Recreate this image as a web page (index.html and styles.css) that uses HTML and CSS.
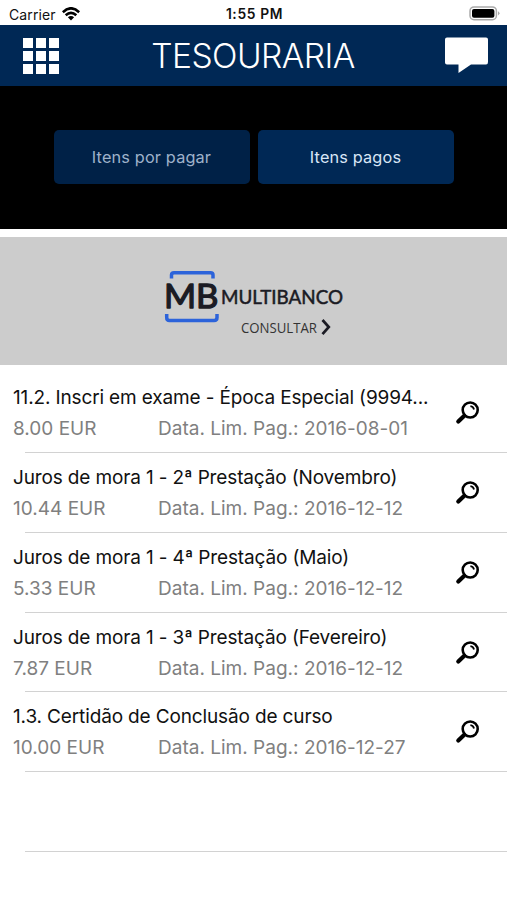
FILE: index.html
```html
<!DOCTYPE html>
<html lang="pt">
<head>
<meta charset="utf-8">
<title>Tesouraria</title>
<link rel="stylesheet" href="styles.css">
</head>
<body>
<svg class="defs" width="0" height="0" aria-hidden="true">
  <symbol id="search" viewBox="0 0 26 26">
    <circle cx="16.2" cy="10" r="7.5" fill="none" stroke="#000" stroke-width="2.6"/>
    <path d="M10.3 15.7L4.3 21.500" fill="none" stroke="#000" stroke-width="4.2" stroke-linecap="round"/>
    <path d="M16.400 6.2Q19.400 6.6 20 9.5" fill="none" stroke="#000" stroke-width="1.8"/>
  </symbol>
</svg>
<div class="status">
  <div class="carrier"><span>Carrier</span>
    <svg class="wifi" width="18" height="14" viewBox="0 0 18 14" fill="none" stroke="#000" stroke-width="2.6">
      <path d="M.8 5.2Q9-2.6 17.2 5.2M3.7 8.3Q9 3.3 14.3 8.3"/>
      <path d="M9 13.4L5.9 10.3Q9 7.8 12.1 10.3Z" fill="#000" stroke="none"/>
    </svg>
  </div>
  <span class="time">1:55 PM</span>
  <svg class="battery" width="31" height="15" viewBox="0 0 31 15">
    <rect x="1" y=".9" width="26.4" height="12.8" rx="4" fill="#fff" stroke="#aaa" stroke-width="1.5"/>
    <rect x="3" y="3" width="22.4" height="8.8" rx="2"/>
    <path d="M29 5.2Q32 7.3 29 9.4Z" fill="#aaa"/>
  </svg>
</div>
<header class="header">
  <div class="grid"><i></i><i></i><i></i><i></i><i></i><i></i><i></i><i></i><i></i></div>
  <h1>TESOURARIA</h1>
  <svg class="chat" width="44" height="37" viewBox="0 0 44 37"><path d="M2 .5H41Q43 .5 43 2.5V25Q43 27.5 41 27.5H26L13.5 36V27.5H2Q0 27.5 0 25.5V2.5Q0 .5 2 .5Z" fill="#fff"/></svg>
</header>
<nav class="tabs">
  <button class="tab tab-dim"><span>Itens por pagar</span></button>
  <button class="tab"><span>Itens pagos</span></button>
</nav>
<section class="banner">
  <svg width="204" height="72" viewBox="152 268 204 72">
    <path d="M171.500 278.500V275Q171.500 272.700 174 272.700H210.500Q213 272.700 213 275V278.500M166.700 314V317.500Q166.700 320.500 169.500 320.500H214Q217 320.500 217 317.500V314" fill="none" stroke="#2c63da" stroke-width="3.5"/>
    <text class="logo" x="164" y="308.300" font-size="33" textLength="54.500" lengthAdjust="spacingAndGlyphs">MB</text>
    <text class="logo-name" x="221" y="303.500" font-size="18.500" textLength="122" lengthAdjust="spacingAndGlyphs">MULTIBANCO</text>
    <text class="consult" x="241" y="332.500" font-size="15" textLength="76" lengthAdjust="spacingAndGlyphs">CONSULTAR</text>
    <path d="M322.500 320L328.800 327L322.500 334.200" fill="none" stroke="#1b1b24" stroke-width="2.700"/>
  </svg>
</section>
<main class="list">
  <div class="row first"><div class="title"><span>11.2. Inscri em exame - Época Especial (9994...</span></div><div class="meta"><span class="amount">8.00 EUR</span><span class="date">Data. Lim. Pag.: 2016-08-01</span></div><svg class="search"><use href="#search"/></svg></div>
  <div class="row"><div class="title"><span>Juros de mora 1 - 2ª Prestação (Novembro)</span></div><div class="meta"><span class="amount">10.44 EUR</span><span class="date">Data. Lim. Pag.: 2016-12-12</span></div><svg class="search"><use href="#search"/></svg></div>
  <div class="row"><div class="title"><span>Juros de mora 1 - 4ª Prestação (Maio)</span></div><div class="meta"><span class="amount">5.33 EUR</span><span class="date">Data. Lim. Pag.: 2016-12-12</span></div><svg class="search"><use href="#search"/></svg></div>
  <div class="row"><div class="title"><span>Juros de mora 1 - 3ª Prestação (Fevereiro)</span></div><div class="meta"><span class="amount">7.87 EUR</span><span class="date">Data. Lim. Pag.: 2016-12-12</span></div><svg class="search"><use href="#search"/></svg></div>
  <div class="row"><div class="title"><span>1.3. Certidão de Conclusão de curso</span></div><div class="meta"><span class="amount">10.00 EUR</span><span class="date">Data. Lim. Pag.: 2016-12-27</span></div><svg class="search"><use href="#search"/></svg></div>
  <div class="row"></div>
</main>
</body>
</html>
```
FILE: styles.css
```css
* { box-sizing: border-box; }
body { margin: 0; width: 507px; height: 900px; overflow: hidden; background: #fff; color: #111; font-family: Inter, "Liberation Sans", sans-serif; }
.defs { display: none; }
.status { height: 25px; padding: 0 7px 0 9px; display: grid; grid-template-columns: 1fr auto 1fr; align-items: center; font-size: 14px; line-height: 25px; }
.carrier { display: flex; align-items: center; gap: 6px; letter-spacing: .1px; }
.carrier span { padding-top: 1px; }
.time { font-weight: 600; font-size: 13.8px; letter-spacing: .65px; padding-top: 2px; }
.battery { justify-self: end; }
.header { height: 61px; background: #002855; color: #fff; display: flex; align-items: center; justify-content: space-between; padding: 0 18px 0 23px; }
.grid { display: grid; grid-template-columns: repeat(3, 10px); grid-auto-rows: 10px; gap: 3px; }
.grid i { background: #fff; }
h1 { margin: 0; padding: 2px 0 0 2px; font-size: 33.5px; font-weight: 350; line-height: 59px; letter-spacing: -.55px; }
.tabs { height: 143px; background: #000; display: flex; justify-content: center; align-items: center; gap: 8px; padding-bottom: 1px; }
.tab { width: 196px; height: 54px; border: 0; border-radius: 5px; background: #002855; color: #d9e6f6; font: 16.3px Inter, sans-serif; letter-spacing: .15px; padding: 0; }
.tab-dim { background: #002147; color: #9fb2ca; }
.banner { height: 128px; margin-top: 8px; background: #ccc; display: flex; justify-content: center; padding: 31px 0 0 1px; }
.logo, .logo-name { fill: #1b1b24; stroke: #1b1b24; stroke-linejoin: round; font-family: Lato, sans-serif; }
.logo { font-weight: 400; stroke-width: 1.3px; }
.logo-name { font-weight: 400; stroke-width: .5px; }
.consult { fill: #333; font-family: "Open Sans", sans-serif; }
.row { height: 79.8px; display: grid; grid-template-columns: 1fr 26px; grid-template-rows: 32px 30px; padding: 9px 27px 0 13px; background: linear-gradient(#d2d2d2, #d2d2d2) 25px 100% / 100% 1px no-repeat; }
.first { height: 88px; padding-top: 17px; }
.title { font-size: 19px; line-height: 32px; white-space: nowrap; letter-spacing: -.14px; }
.meta { grid-row: 2; display: flex; font-size: 19px; line-height: 30px; color: #808080; white-space: nowrap; letter-spacing: .01px; }
.amount { width: 145px; }
.search { grid-column: 2; grid-row: 1 / 3; width: 26px; height: 26px; margin-top: 18px; }
```
